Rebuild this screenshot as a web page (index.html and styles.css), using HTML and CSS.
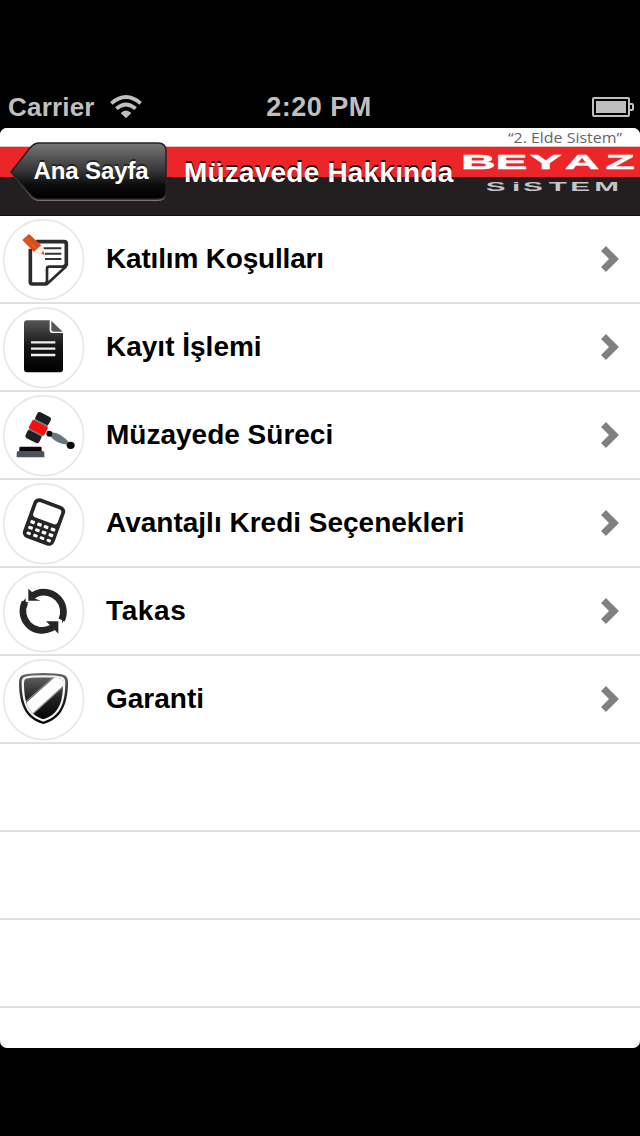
FILE: index.html
```html
<!DOCTYPE html>
<html lang="tr">
<head>
    <meta charset="UTF-8">
    <meta name="viewport" content="width=device-width, initial-scale=1.0">
    <title>Müzayede Hakkında</title>
    <link rel="stylesheet" href="styles.css">
</head>
<body>
    <div class="status">
        <div class="carrier">
            <span class="carrier-name">Carrier</span>
            <svg class="wifi" viewBox="0 0 96 72">
                <path d="M4 25 Q48 -13 92 25" stroke-width="11"/>
                <path d="M19 41 Q48 16 77 41" stroke-width="11"/>
                <path class="dot" d="M32 54 Q48 39 64 54 L48 70 Z"/>
            </svg>
        </div>
        <span class="time">2:20 PM</span>
        <svg class="battery" viewBox="0 0 42 20">
            <rect class="case" x="1" y="1" width="36" height="18" rx="1"/>
            <rect class="level" x="4" y="4" width="30" height="12"/>
            <path class="case" d="M38 7 H40 Q41 7 41 8 V12 Q41 13 40 13 H38"/>
        </svg>
    </div>
    <div class="app">
        <header class="navbar">
            <button class="back">
                <svg class="back-shape" viewBox="0 0 157 60">
                    <defs>
                        <linearGradient id="backFill" x1="0" y1="0" x2="0" y2="1">
                            <stop offset="0" stop-color="#777"/>
                            <stop offset="0.5" stop-color="#353535"/>
                            <stop offset="0.75" stop-color="#0c0c0c"/>
                            <stop offset="1" stop-color="#000"/>
                        </linearGradient>
                    </defs>
                    <path class="back-glow" d="M29 2 H148 Q156 2 156 10 V51 Q156 59 148 59 H29 Q24 59 20 54 L1 31 L20 7 Q24 2 29 2 Z"/>
                    <path class="back-fill" d="M29 1 H148 Q156 1 156 9 V49 Q156 57 148 57 H29 Q24 57 20 52 L1 30 L20 6 Q24 1 29 1 Z"/>
                </svg>
                <span class="back-text">Ana Sayfa</span>
            </button>
            <h1 class="title">Müzavede Hakkında</h1>
            <svg class="logo" viewBox="0 0 180 88">
                <text class="slogan" x="48" y="14.5" textLength="114" lengthAdjust="spacingAndGlyphs">“2. Elde Sistem”</text>
                <text class="brand" transform="scale(2.4 1)" y="41" x="0.4 14.8 29.1 43.7 60.6">BEYAZ</text>
                <text class="brand-sub" transform="scale(2.2 1)" y="63.5" x="11.7 23.6 28.6 40.3 50.1 61">SiSTEM</text>
            </svg>
        </header>
        <ul class="list">
            <li class="row">
                <svg class="icon" viewBox="0 0 264 264">
                    <circle class="ring" cx="131" cy="131" r="120"/>
                    <path d="M91 98 V198 Q91 204 97 204 H136 L199 146 V84 Q199 77 192 77 H108" fill="#fff" stroke="#2c2c2c" stroke-width="11"/>
                    <path d="M141 204 V158 Q141 152 148 152 H197 Z" fill="#fff" stroke="#2c2c2c" stroke-width="8" stroke-linejoin="round"/>
                    <path d="M131 97 H184 M135 113 H184 M135 129 H184" stroke="#333" stroke-width="6"/>
                    <path d="M67 72 L87 54 L124 88 L102 108 Z" fill="#dc4b1c"/>
                    <path d="M76 67 L110 99" stroke="#e55c28" stroke-width="5"/>
                    <path d="M102 108 L124 88 L133 117 Z" fill="#fff1e8" stroke="#e5b49c" stroke-width="1"/>
                    <path d="M124 112 L130 106 L134 118 Z" fill="#d5481c"/>
                </svg>
                <span class="label tight">Katılım Koşulları</span>
                <svg class="chevron" viewBox="0 0 20 26"><path d="M3.5 2.5 L14 13 L3.5 23.5"/></svg>
            </li>
            <li class="row">
                <svg class="icon" viewBox="0 0 264 264">
                    <defs>
                        <linearGradient id="pageFill" x1="0" y1="0" x2="0" y2="1">
                            <stop offset="0" stop-color="#555"/>
                            <stop offset="0.5" stop-color="#151515"/>
                            <stop offset="1" stop-color="#000"/>
                        </linearGradient>
                    </defs>
                    <circle class="ring" cx="131" cy="131" r="120"/>
                    <path d="M81 49 H149 V78 Q149 87 158 87 H189 V196 Q189 205 180 205 H81 Q72 205 72 196 V58 Q72 49 81 49 Z" fill="url(#pageFill)"/>
                    <path d="M154 50 L188 83 H160 Q154 83 154 77 Z" fill="#555"/>
                    <path d="M93 115 H166 M93 134 H166 M93 153 H166" stroke="#eee" stroke-width="7"/>
                </svg>
                <span class="label">Kayıt İşlemi</span>
                <svg class="chevron" viewBox="0 0 20 26"><path d="M3.5 2.5 L14 13 L3.5 23.5"/></svg>
            </li>
            <li class="row">
                <svg class="icon" viewBox="0 0 264 264">
                    <circle class="ring" cx="131" cy="131" r="120"/>
                    <g transform="translate(115 107) rotate(27)">
                        <rect x="-22" y="-44" width="45" height="27" rx="7" fill="#1b1e25"/>
                        <rect x="-24" y="16" width="46" height="28" rx="7" fill="#1b1e25"/>
                        <rect x="-22" y="-19" width="45" height="38" fill="#7d7d80"/>
                        <rect x="-26" y="-14" width="52" height="28" rx="2" fill="#fb0d0d"/>
                    </g>
                    <path d="M154 123 Q182 124 207 155 Q176 157 152 131 Z" fill="#68777d" stroke="#68777d" stroke-width="5"/>
                    <circle cx="148" cy="125" r="9" fill="#08090b"/>
                    <ellipse cx="212" cy="160" rx="12" ry="11" fill="#08090b"/>
                    <path d="M62 164 H121 Q125 164 125 168 V178 H58 V168 Q58 164 62 164 Z" fill="#08090b"/>
                    <path d="M56 177 H127 Q133 177 133 183 V196 H50 V183 Q50 177 56 177 Z" fill="#4a535d"/>
                </svg>
                <span class="label">Müzayede Süreci</span>
                <svg class="chevron" viewBox="0 0 20 26"><path d="M3.5 2.5 L14 13 L3.5 23.5"/></svg>
            </li>
            <li class="row">
                <svg class="icon" viewBox="0 0 264 264">
                    <circle class="ring" cx="131" cy="131" r="120"/>
                    <g transform="translate(132 126) rotate(20)">
                        <rect x="-50" y="-63" width="100" height="126" rx="18" fill="#262626"/>
                        <rect x="-39" y="-52" width="78" height="48" rx="9" fill="#fff"/>
                        <g fill="#fff">
                            <rect x="-39" y="7" width="14" height="10" rx="3"/>
                            <rect x="-17" y="7" width="14" height="10" rx="3"/>
                            <rect x="4" y="7" width="14" height="10" rx="3"/>
                            <rect x="26" y="7" width="14" height="10" rx="3"/>
                            <rect x="-39" y="25" width="14" height="10" rx="3"/>
                            <rect x="-17" y="25" width="14" height="10" rx="3"/>
                            <rect x="4" y="25" width="14" height="10" rx="3"/>
                            <rect x="26" y="25" width="14" height="10" rx="3"/>
                            <rect x="-38" y="43" width="13" height="9" rx="3"/>
                            <rect x="-17" y="43" width="14" height="9" rx="3"/>
                            <rect x="4" y="43" width="14" height="9" rx="3"/>
                            <rect x="26" y="43" width="13" height="9" rx="3"/>
                        </g>
                    </g>
                </svg>
                <span class="label">Avantajlı Kredi Seçenekleri</span>
                <svg class="chevron" viewBox="0 0 20 26"><path d="M3.5 2.5 L14 13 L3.5 23.5"/></svg>
            </li>
            <li class="row">
                <svg class="icon" viewBox="0 0 264 264">
                    <circle class="ring" cx="131" cy="131" r="120"/>
                    <path d="M98 83 Q104 79 111 76 A59 59 0 0 1 185 156" fill="none" stroke="#262626" stroke-width="20"/>
                    <path d="M85 62 L100 76 L106 92 L122 98 H85 Z" fill="#262626"/>
                    <path d="M75 103 A58 58 0 0 0 153 181 L160 177" fill="none" stroke="#262626" stroke-width="20"/>
                    <path d="M62 108 L77 91 V101 L88 104 Z" fill="#262626"/>
                    <path d="M138 160 H175 V197 L161 182 Z" fill="#262626"/>
                    <path d="M178 151 L186 154 V165 L198 149 Z" fill="#262626"/>
                </svg>
                <span class="label wide">Takas</span>
                <svg class="chevron" viewBox="0 0 20 26"><path d="M3.5 2.5 L14 13 L3.5 23.5"/></svg>
            </li>
            <li class="row">
                <svg class="icon" viewBox="0 0 264 264">
                    <defs>
                        <linearGradient id="shieldFill" x1="0" y1="0" x2="0" y2="1">
                            <stop offset="0" stop-color="#666"/>
                            <stop offset="0.5" stop-color="#222"/>
                            <stop offset="1" stop-color="#000"/>
                        </linearGradient>
                        <clipPath id="shieldClip">
                            <path d="M130 64 Q165 64 183 68 Q189 70 189 80 C189 138 177 174 130 190 C83 174 72 138 72 80 Q72 70 78 68 Q95 64 130 64 Z"/>
                        </clipPath>
                    </defs>
                    <circle class="ring" cx="131" cy="131" r="120"/>
                    <path d="M130 51 Q170 51 190 56 Q204 60 204 78 C204 145 184 190 130 204 C76 190 57 145 57 78 Q57 60 71 56 Q92 51 130 51 Z" fill="url(#shieldFill)"/>
                    <path d="M130 58 Q167 58 186 62 Q196 65 196 79 C196 143 180 182 130 197 C80 182 65 143 65 79 Q65 65 75 62 Q93 58 130 58 Z" fill="#f4f4f4"/>
                    <g clip-path="url(#shieldClip)">
                        <rect x="65" y="55" width="130" height="145" fill="url(#shieldFill)"/>
                        <path d="M60 157 L170 58 L215 68 L90 182 Z" fill="#fff"/>
                        <path d="M64 150 L168 57 M92 179 L198 84" stroke="#888" stroke-width="4"/>
                    </g>
                </svg>
                <span class="label">Garanti</span>
                <svg class="chevron" viewBox="0 0 20 26"><path d="M3.5 2.5 L14 13 L3.5 23.5"/></svg>
            </li>
            <li class="row"></li>
            <li class="row"></li>
            <li class="row"></li>
        </ul>
    </div>
</body>
</html>
```
FILE: styles.css
```css
*{
    margin: 0;
    padding: 0;
    box-sizing: border-box;
}
body{
    width: 640px;
    height: 1136px;
    background-color: #000;
    font-family: "Liberation Sans", Arial, sans-serif;
    font-weight: bold;
    overflow: hidden;
}
.status{
    height: 128px;
    padding: 86px 6px 0 8px;
    display: grid;
    grid-template-columns: 1fr auto 1fr;
    align-items: center;
    color: #bfbfbf;
    font-size: 27px;
}
.carrier{
    display: flex;
    align-items: center;
    gap: 15px;
}
.carrier-name{
    padding-top: 1px;
    font-size: 26px;
    letter-spacing: 0.2px;
}
.wifi{
    width: 32px;
    height: 24px;
    fill: none;
    stroke: #bfbfbf;
}
.wifi .dot{
    fill: #bfbfbf;
    stroke: none;
}
.time{
    padding: 1px 4px 0 0;
    letter-spacing: 0.5px;
}
.battery{
    width: 42px;
    height: 20px;
    justify-self: end;
}
.case{
    fill: none;
    stroke: #bfbfbf;
    stroke-width: 2;
}
.level{
    fill: #bfbfbf;
}
.app{
    height: 920px;
    background-color: #fff;
    border-radius: 7px;
    overflow: hidden;
}
.navbar{
    height: 88px;
    display: flex;
    background: linear-gradient(#fff 18px, #e8bfc0 18px, #e8bfc0 19px, #ec2529 19px, #ec2529 49px, #231f20 49px, #231f20 87px, #111 87px);
}
.back{
    width: 157px;
    height: 60px;
    margin: 14px 0 0 10px;
    position: relative;
    border: none;
    background: none;
    font: inherit;
}
.back-shape{
    position: absolute;
    left: 0;
    top: 0;
    width: 157px;
    height: 60px;
}
.back-fill{
    fill: url(#backFill);
    stroke: #222;
    stroke-width: 1.5;
}
.back-glow{
    fill: #777;
}
.back-text{
    position: relative;
    display: block;
    padding: 0 0 2px 5px;
    color: #fff;
    font-size: 24px;
    letter-spacing: -0.1px;
    line-height: 58px;
    text-shadow: 0 -2px 0 rgba(0, 0, 0, 0.5);
    white-space: nowrap;
}
.title{
    width: 270px;
    margin-left: 17px;
    color: #fff;
    font-size: 28px;
    letter-spacing: 0.2px;
    line-height: 90px;
    text-shadow: 0 -2px 0 #000;
    white-space: nowrap;
}
.logo{
    width: 180px;
    height: 88px;
    margin-left: 6px;
    flex-shrink: 0;
}
.slogan{
    font-family: "Open Sans", sans-serif;
    font-size: 15px;
    font-weight: normal;
    fill: #666;
}
.brand{
    font-size: 20px;
    fill: #fff;
    stroke: #fff;
    stroke-width: 0.4;
}
.brand-sub{
    font-size: 13.5px;
    fill: #c4c4c4;
}
.list{
    list-style: none;
}
.row{
    height: 88px;
    display: flex;
    border-bottom: 2px solid #e0e0e0;
}
.icon{
    width: 88px;
    height: 88px;
    flex-shrink: 0;
}
.ring{
    fill: #fff;
    stroke: #e8e8e8;
    stroke-width: 5;
}
.label{
    flex: 1;
    padding-left: 18px;
    font-size: 28px;
    line-height: 86px;
    color: #000;
    white-space: nowrap;
}
.tight{
    letter-spacing: -0.18px;
}
.wide{
    letter-spacing: 0.6px;
}
.chevron{
    width: 20px;
    height: 26px;
    margin: 30px 20px 0 0;
    fill: none;
    stroke: #808080;
    stroke-width: 7;
}
```
